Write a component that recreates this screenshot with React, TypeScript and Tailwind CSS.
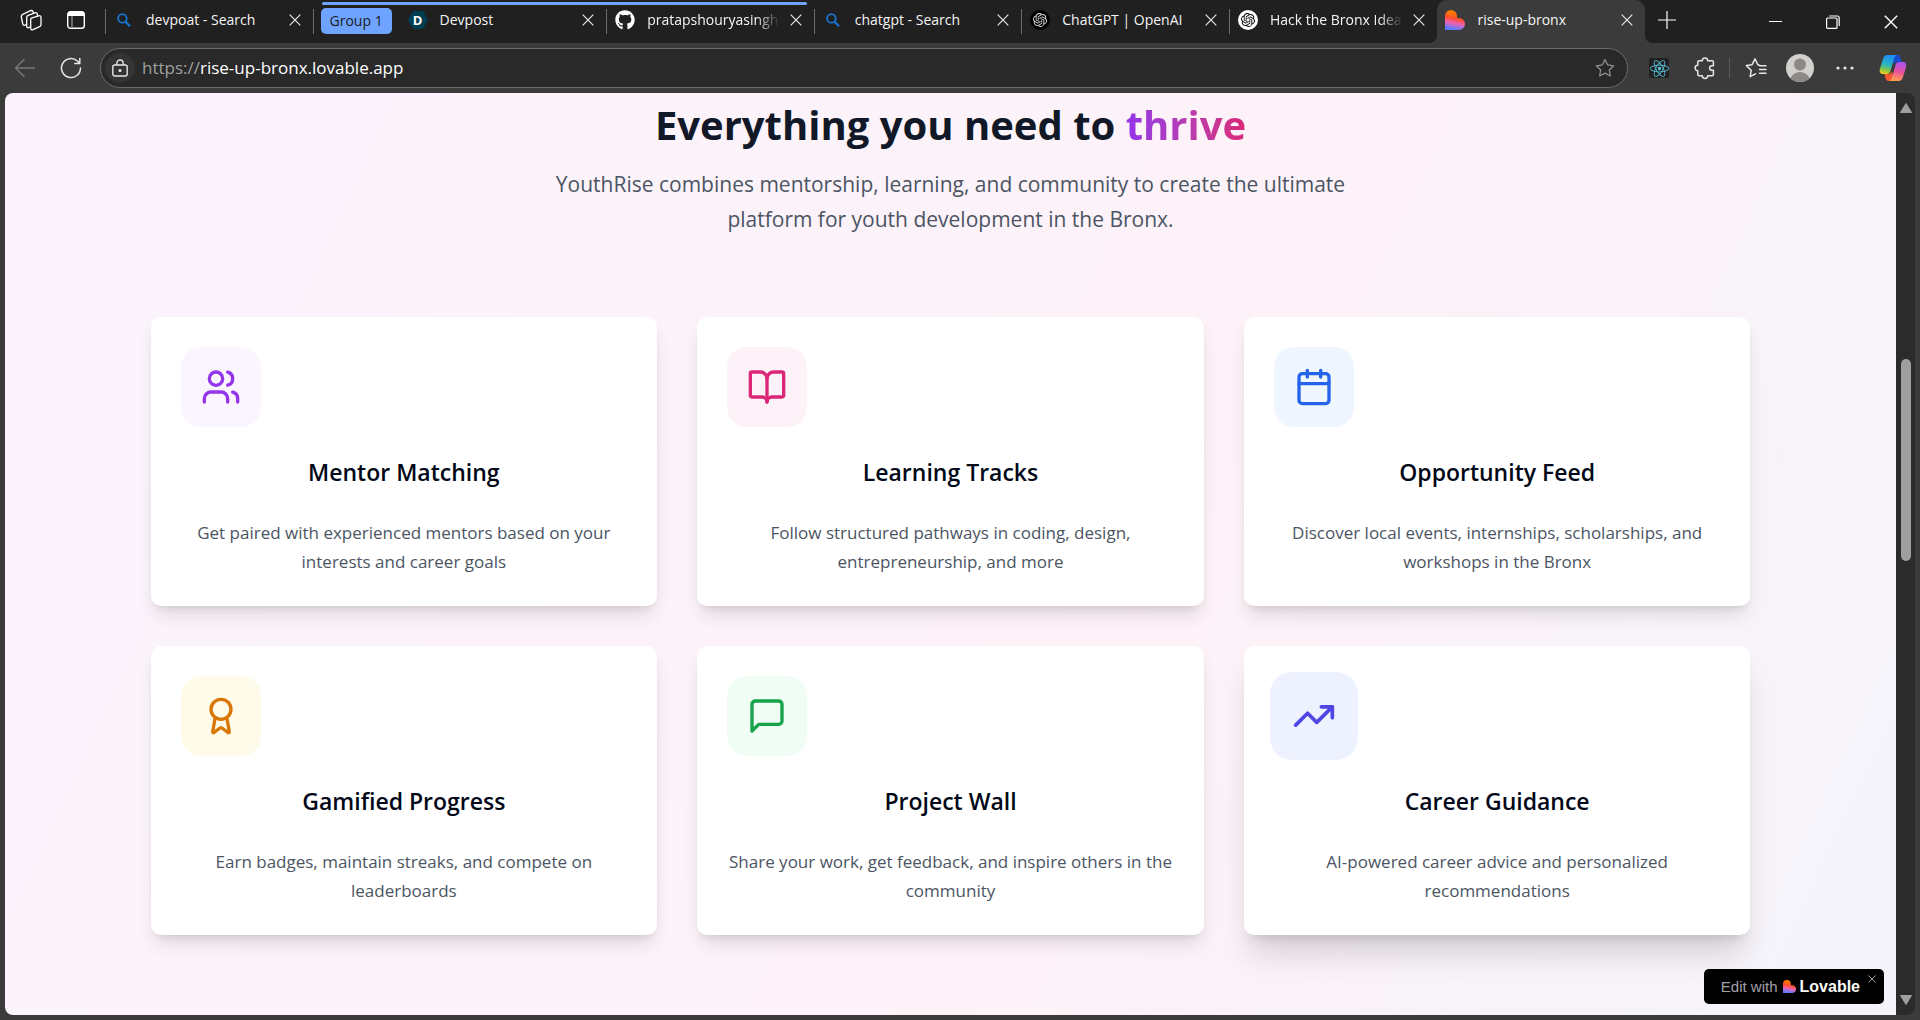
import React from "react";
import { Award, BookOpen, Calendar, TrendingUp, Users } from "lucide-react";
import { FaGithub, FaReact } from "react-icons/fa";
import { SiOpenai } from "react-icons/si";

type IconProps = { className?: string };

/* ---------- icons ---------- */

function MessageIcon({ className }: IconProps) {
  return (
    <svg viewBox="0 0 24 24" fill="none" stroke="currentColor" strokeWidth="2" strokeLinecap="round" strokeLinejoin="round" className={className}>
      <path d="M21 15a2 2 0 0 1-2 2H7l-4 4V5a2 2 0 0 1 2-2h14a2 2 0 0 1 2 2z" />
    </svg>
  );
}

function CloseIcon({ className }: IconProps) {
  return (
    <svg viewBox="0 0 12 12" fill="none" stroke="currentColor" strokeWidth="1.2" className={className}>
      <path d="M.7.7l10.6 10.6M11.3.7L.7 11.3" />
    </svg>
  );
}

function SearchFavicon() {
  return (
    <svg viewBox="0 0 20 20" fill="none" stroke="#1477d1" className="size-5">
      <circle cx="8.4" cy="8.4" r="4.3" strokeWidth="1.8" />
      <path d="M11.6 11.8l4.4 4.4" strokeWidth="2.1" />
    </svg>
  );
}

function DevpostFavicon() {
  return (
    <span className="relative flex size-5 items-center justify-center">
      <svg viewBox="0 0 20 20" className="absolute inset-0 size-5">
        <path d="M5.2 1h9.6L20 10l-5.2 9H5.2L0 10z" fill="#003e54" />
      </svg>
      <span className="relative text-[13px] leading-none font-bold text-white">D</span>
    </span>
  );
}

function LovableHeart({ className }: IconProps) {
  return (
    <svg viewBox="0 0 20 20" className={className}>
      <defs>
        <linearGradient id="heart" x1="0.55" y1="0" x2="0.35" y2="1">
          <stop offset="0.15" stopColor="#ff7a00" />
          <stop offset="0.42" stopColor="#ff4f2c" />
          <stop offset="0.65" stopColor="#ee62b4" />
          <stop offset="0.95" stopColor="#5b7bff" />
        </linearGradient>
      </defs>
      <path d="M6 0a6 6 0 0 1 6 6v2h2a6 6 0 0 1 0 12H0V6a6 6 0 0 1 6-6z" fill="url(#heart)" />
    </svg>
  );
}

function WorkspacesIcon() {
  return (
    <svg viewBox="0 0 22 22" fill="none" stroke="currentColor" strokeWidth="1.3" strokeLinejoin="round" strokeLinecap="round" className="size-[22px]">
      <path d="M11.3 9.1l7.5-2.3c1.300-.4 2.200.3 2.200 1.500v7.200c0 1-.4 1.700-1.400 2.100l-6.600 3.100c-1.200.5-2.300-.1-2.300-1.400v-7.800c0-1.200-.1-2 .6-2.400z" />
      <path d="M10.700 17.800l-2 .8c-1.200.4-2-.3-2-1.400V8.600c0-1.100.5-1.900 1.500-2.300l6.700-2.500c1.200-.4 2.200 0 2.500 1.300v1.800" />
      <path d="M6.500 15.700l-1.600.5c-1.200.4-2.200-.3-2.200-1.500L1.300 8c-.1-1.100.4-2.200 1.400-2.600l7.800-3.700c1.200-.5 2-.1 2.500.8l.5 1.500" />
    </svg>
  );
}

function TabPanelIcon() {
  return (
    <svg viewBox="0 0 20 20" className="size-5" fill="none" stroke="currentColor" strokeWidth="1.4">
      <rect x="1.7" y="1.7" width="16.6" height="16.6" rx="2.8" />
      <path d="M2 3.500A2 2 0 0 1 4 1.500h12a2 2 0 0 1 2 2V6H2z" fill="currentColor" stroke="none" />
      <path d="M6 6v12" stroke="#8a8a8a" />
    </svg>
  );
}

function PuzzleIcon() {
  return (
    <svg viewBox="0 0 24 24" fill="none" stroke="currentColor" strokeWidth="1.5" strokeLinejoin="round" className="size-6">
      <path d="M6 4.800h3.300a2.700 2.700 0 0 1 5.400 0h4.500a1.200 1.200 0 0 1 1.200 1.200v3.700h-1.500a2.300 2.300 0 1 0 0 4.600h1.500v4.200a1.200 1.200 0 0 1-1.200 1.200h-4.500a2.700 2.700 0 0 1-5.400 0H6a1.200 1.200 0 0 1-1.200-1.200v-3.800a2.700 2.700 0 0 1 0-5.400V6A1.200 1.200 0 0 1 6 4.800z" />
    </svg>
  );
}

function StarIcon({ className }: IconProps) {
  return (
    <svg viewBox="0 0 24 24" fill="none" stroke="currentColor" strokeWidth="1.4" strokeLinejoin="round" className={className}>
      <path d="M12 2.800l2.900 5.900 6.500.9-4.700 4.600 1.100 6.500-5.800-3.100-5.800 3.100 1.100-6.500-4.700-4.600 6.500-.9z" />
    </svg>
  );
}

function FavoritesIcon() {
  return (
    <svg viewBox="0 0 24 24" fill="none" stroke="currentColor" strokeWidth="1.5" strokeLinejoin="round" strokeLinecap="round" className="size-6">
      <path d="M11.500 17.800l-5.300 2.900 1-6.500L2.400 9.600l5.700-.9L11 2.800l2.800 5.900 1.700.5M15.500 13.500h6.500M15.500 17.200h6.500M15.500 9.800h6.500" />
    </svg>
  );
}

function CopilotIcon() {
  return (
    <svg viewBox="0 0 28 28" className="size-7">
      <defs>
        <linearGradient id="cpLeft" x1="0.5" y1="0" x2="0.3" y2="1">
          <stop offset="0" stopColor="#1f8df5" />
          <stop offset="0.5" stopColor="#27b4c4" />
          <stop offset="0.8" stopColor="#8cc63f" />
          <stop offset="1" stopColor="#f0cf1b" />
        </linearGradient>
        <linearGradient id="cpRight" x1="0.6" y1="0" x2="0.4" y2="1">
          <stop offset="0" stopColor="#a855f0" />
          <stop offset="0.5" stopColor="#e9509c" />
          <stop offset="1" stopColor="#ffa24a" />
        </linearGradient>
      </defs>
      <path d="M13 1h5.500c2 0 2.600 1.300 3.200 3.200L22.600 8h-4c-2 0-3 1-3.600 3z" fill="#1849c8" />
      <path d="M15 27H9.500c-2 0-2.600-1.300-3.200-3.200L5.400 20h4c2 0 3-1 3.600-3z" fill="#f3582f" />
      <path d="M8.500 1H18c-1.600.5-2.300 1.600-2.900 3.500L11.400 17c-.6 2-1.600 3-3.500 3H4c-3 0-3.800-2.500-3-5.500L4 5c.8-2.700 2-4 4.500-4z" fill="url(#cpLeft)" />
      <path d="M19.500 27H10c1.600-.5 2.300-1.600 2.900-3.500L16.600 11c.6-2 1.600-3 3.500-3H24c3 0 3.800 2.500 3 5.500L24 23c-.8 2.700-2 4-4.500 4z" fill="url(#cpRight)" />
    </svg>
  );
}

/* ---------- browser window ---------- */

type TabProps = {
  title: string;
  icon: React.ReactNode;
  active?: boolean;
  divider?: boolean;
  fade?: boolean;
};

function Tab({ title, icon, active, divider = true, fade }: TabProps) {
  return (
    <div
      className={
        active
          ? "relative flex h-[43px] min-w-0 flex-[1_1_0px] rounded-t-[10px] bg-[#3b3b3b]"
          : "relative flex h-[43px] min-w-0 flex-[1_1_0px]"
      }
    >
      {active && (
        <>
          <span className="absolute bottom-0 -left-2 size-2 bg-[radial-gradient(circle_at_0_0,#202020_8px,#3b3b3b_8px)]" />
          <span className="absolute -right-2 bottom-0 size-2 bg-[radial-gradient(circle_at_100%_0,#202020_8px,#3b3b3b_8px)]" />
        </>
      )}
      <div className="flex h-10 min-w-0 flex-1 items-center pr-[10px] pl-2">
        <span className="flex size-5 shrink-0 items-center justify-center">{icon}</span>
        <a
          href="#"
          className={
            fade
              ? "ml-3 min-w-0 flex-1 [mask-image:linear-gradient(to_right,black_calc(100%-24px),transparent)] text-[14px] leading-5 whitespace-nowrap text-[#f4f4f4]"
              : "ml-3 min-w-0 flex-1 text-[14px] leading-5 whitespace-nowrap text-[#f4f4f4]"
          }
        >
          {title}
        </a>
        <button aria-label={`Close ${title}`} className="ml-2 flex size-4 shrink-0 items-center justify-center text-[#e8e8e8]">
          <CloseIcon className="size-3" />
        </button>
      </div>
      {divider && <span className="mt-[9px] h-[25px] w-px shrink-0 bg-[#6b6b6b]" />}
    </div>
  );
}

function TabStrip() {
  return (
    <header className="flex h-[43px] bg-[#202020] text-white">
      <div className="flex w-[106px] shrink-0">
        <div className="flex h-10 flex-1 items-center gap-6 pl-5">
          <button aria-label="Workspaces">
            <WorkspacesIcon />
          </button>
          <button aria-label="Tab actions">
            <TabPanelIcon />
          </button>
        </div>
        <span className="mt-[9px] h-[25px] w-px bg-[#6b6b6b]" />
      </div>

      <nav aria-label="Tabs" className="flex min-w-0 flex-1">
        <Tab title="devpoat - Search" icon={<SearchFavicon />} />
        <div className="relative flex min-w-0 flex-[2_1_86px]">
          <span className="absolute top-[2px] right-2 left-2 h-[3px] rounded-full bg-[#6ea4ff]" />
          <button className="mr-2 ml-[7px] mt-2 h-[26px] w-[71px] shrink-0 rounded-[5px] bg-[#6ea4ff] text-[14px] leading-5 text-[#1b1b1b]">
            Group 1
          </button>
          <Tab title="Devpost" icon={<DevpostFavicon />} />
          <Tab title="pratapshouryasingh" icon={<FaGithub className="size-5" />} fade />
        </div>
        <Tab title="chatgpt - Search" icon={<SearchFavicon />} />
        <Tab
          title="ChatGPT | OpenAI"
          icon={
            <span className="flex size-5 items-center justify-center rounded-full bg-black">
              <SiOpenai className="size-[14px] text-[#dcdcdc]" />
            </span>
          }
        />
        <Tab
          title="Hack the Bronx Idea"
          divider={false}
          fade
          icon={
            <span className="flex size-5 items-center justify-center rounded-full bg-white">
              <SiOpenai className="size-[14px] text-black" />
            </span>
          }
        />
        <Tab title="rise-up-bronx" active divider={false} icon={<LovableHeart className="size-5" />} />
      </nav>

      <div className="flex w-[275px] shrink-0 justify-between">
        <button aria-label="New tab" className="flex h-10 w-11 items-center justify-center">
          <svg viewBox="0 0 18 18" stroke="currentColor" strokeWidth="1.2" className="size-[18px]">
            <path d="M9 0v18M0 9h18" />
          </svg>
        </button>
        <div className="flex">
          <button aria-label="Minimize" className="flex h-[43px] w-[58px] items-center justify-center">
            <span className="h-px w-[13px] bg-white" />
          </button>
          <button aria-label="Restore" className="flex h-[43px] w-[58px] items-center justify-center">
            <svg viewBox="0 0 14 14" fill="none" stroke="currentColor" strokeWidth="1.2" className="size-[14px]">
              <rect x="0.6" y="3" width="10.4" height="10.4" rx="1" />
              <path d="M3.200 1h8a2 2 0 0 1 2 2v8" />
            </svg>
          </button>
          <button aria-label="Close window" className="flex h-[43px] w-[58px] items-center justify-center">
            <CloseIcon className="size-[14px]" />
          </button>
        </div>
      </div>
    </header>
  );
}

function Toolbar() {
  return (
    <div className="flex h-[50px] items-center bg-[#3b3b3b] pr-[13px] text-[#e6e6e6]">
      <div className="flex w-[100px] shrink-0 items-center gap-6 pl-[14px]">
        <button aria-label="Back" className="text-[#7a7a7a]">
          <svg viewBox="0 0 22 22" fill="none" stroke="currentColor" strokeWidth="1.3" className="size-[22px]">
            <path d="M10.500 2L1.500 11l9 9M1.500 11H21" />
          </svg>
        </button>
        <button aria-label="Refresh">
          <svg viewBox="0 0 22 22" fill="none" stroke="currentColor" strokeWidth="1.5" strokeLinecap="round" strokeLinejoin="round" className="size-[22px]">
            <path d="M20.500 11A9.500 9.500 0 1 1 17.400 4l2 2M19.800 1.500V6.500h-5" />
          </svg>
        </button>
      </div>

      <div className="flex h-10 min-w-0 flex-1 items-center rounded-full border border-[#6a6a6a] bg-[#292929] pr-[11px] pl-1">
        <button aria-label="Site information" className="flex size-[30px] shrink-0 items-center justify-center rounded-full bg-[#343434]">
          <svg viewBox="0 0 16 18" fill="none" stroke="currentColor" strokeWidth="1.4" className="h-[18px] w-4">
            <rect x="0.8" y="6" width="14.4" height="11" rx="2" />
            <path d="M4.800 6V4.200a3.200 3.200 0 0 1 6.400 0V6" />
            <circle cx="8" cy="11.5" r="0.9" fill="currentColor" />
          </svg>
        </button>
        <a href="https://rise-up-bronx.lovable.app" className="ml-[7px] flex-1 text-[17px] leading-6 text-white">
          <span className="text-[#a0a0a0]">https://</span>rise-up-bronx.lovable.app
        </a>
        <button aria-label="Add to favorites" className="text-[#8f8f8f]">
          <StarIcon className="size-[22px]" />
        </button>
      </div>

      <div className="flex shrink-0 items-center">
        <button aria-label="React Developer Tools" className="ml-[21px] flex size-5 items-center justify-center rounded-[2px] bg-[#202020]">
          <FaReact className="size-[19px] text-[#58c4dc]" />
        </button>
        <button aria-label="Extensions" className="ml-6">
          <PuzzleIcon />
        </button>
        <span className="ml-3 h-5 w-px bg-[#5c5c5c]" />
        <button aria-label="Favorites" className="ml-[14px]">
          <FavoritesIcon />
        </button>
        <button aria-label="Profile" className="ml-[18px]">
          <svg viewBox="0 0 28 28" className="size-7">
            <defs>
              <clipPath id="avatar">
                <circle cx="14" cy="14" r="14" />
              </clipPath>
            </defs>
            <circle cx="14" cy="14" r="14" fill="#d2d0cd" />
            <g clipPath="url(#avatar)" fill="#8c8884">
              <circle cx="14" cy="10.5" r="6" />
              <circle cx="14" cy="28.5" r="10.5" />
            </g>
          </svg>
        </button>
        <button aria-label="Settings and more" className="ml-[22px]">
          <svg viewBox="0 0 18 18" fill="currentColor" className="size-[18px]">
            <circle cx="2" cy="9" r="1.6" />
            <circle cx="9" cy="9" r="1.6" />
            <circle cx="16" cy="9" r="1.6" />
          </svg>
        </button>
        <button aria-label="Copilot" className="ml-[25px]">
          <CopilotIcon />
        </button>
      </div>
    </div>
  );
}

function Scrollbar() {
  return (
    <div className="flex w-[19px] shrink-0 flex-col items-center bg-[#2b2b2b] py-[10px]">
      <button aria-label="Scroll up">
        <svg viewBox="0 0 12 10" className="h-[10px] w-3">
          <path d="M6 .5L11.500 9.500H.5z" fill="#a0a0a0" stroke="#a0a0a0" strokeLinejoin="round" />
        </svg>
      </button>
      <span className="grow-[246]" />
      <span className="w-[10px] grow-[202] rounded-full bg-[#9f9f9f]" />
      <span className="grow-[434]" />
      <button aria-label="Scroll down">
        <svg viewBox="0 0 12 10" className="h-[10px] w-3">
          <path d="M.5.5h11L6 9.500z" fill="#a0a0a0" stroke="#a0a0a0" strokeLinejoin="round" />
        </svg>
      </button>
    </div>
  );
}

/* ---------- page ---------- */

const features = [
  {
    icon: Users,
    title: "Mentor Matching",
    description: "Get paired with experienced mentors based on your interests and career goals",
    color: "bg-[#faf5ff] text-[#9333ea]",
  },
  {
    icon: BookOpen,
    title: "Learning Tracks",
    description: "Follow structured pathways in coding, design, entrepreneurship, and more",
    color: "bg-[#fdf2f8] text-[#db2777]",
  },
  {
    icon: Calendar,
    title: "Opportunity Feed",
    description: "Discover local events, internships, scholarships, and workshops in the Bronx",
    color: "bg-[#eff6ff] text-[#2563eb]",
  },
  {
    icon: Award,
    title: "Gamified Progress",
    description: "Earn badges, maintain streaks, and compete on leaderboards",
    color: "bg-[#fffbeb] text-[#d97706]",
  },
  {
    icon: MessageIcon,
    title: "Project Wall",
    description: "Share your work, get feedback, and inspire others in the community",
    color: "bg-[#f0fdf4] text-[#16a34a]",
  },
  {
    icon: TrendingUp,
    title: "Career Guidance",
    description: "AI-powered career advice and personalized recommendations",
    color: "bg-[#eef2ff] text-[#4f46e5]",
    hovered: true,
  },
];

function FeatureCard({ feature }: { feature: (typeof features)[number] }) {
  const Icon = feature.icon;
  return (
    <article
      className={`rounded-[10px] bg-white p-[30px] ${
        feature.hovered
          ? "shadow-[0_25px_31px_-6px_rgba(0,0,0,0.14),0_10px_12px_-7px_rgba(0,0,0,0.12)]"
          : "shadow-[0_12px_19px_-4px_rgba(0,0,0,0.12),0_5px_8px_-5px_rgba(0,0,0,0.12)]"
      }`}
    >
      <div
        className={`flex size-20 items-center justify-center rounded-[20px] ${feature.color} ${
          feature.hovered ? "scale-110" : ""
        }`}
      >
        <Icon className="size-10" />
      </div>
      <h3 className="mt-7 text-center text-[23px] leading-[35px] font-semibold text-[#020817]">{feature.title}</h3>
      <p className="mt-7 text-center text-[17px] leading-[29px] text-[#4b5563]">{feature.description}</p>
    </article>
  );
}

function LovableBadge() {
  return (
    <aside className="absolute right-3 bottom-[11px] flex h-[35px] items-center rounded-[5px] bg-black pr-6 pl-[17px] font-['Liberation_Sans',Arial,sans-serif]">
      <a href="#" className="flex items-center">
        <span className="text-[15px] leading-5 text-[#a1a1aa]">Edit with</span>
        <LovableHeart className="ml-[5px] size-[13px]" />
        <span className="ml-1 text-[16px] leading-5 font-bold text-[#fcfbf8]">Lovable</span>
      </a>
      <button aria-label="Dismiss" className="absolute top-[6px] right-2 text-[#c9c9c9]">
        <CloseIcon className="size-2" />
      </button>
    </aside>
  );
}

export default function App() {
  return (
    <div className="flex min-h-screen flex-col bg-[#3b3b3b] font-['Segoe_UI','Open_Sans','Noto_Sans',sans-serif]">
      <TabStrip />
      <Toolbar />
      <div className="mx-[5px] mb-[5px] flex flex-1 overflow-hidden rounded-lg">
        <main className="relative min-w-0 flex-1 bg-[linear-gradient(115deg,#fbf4fd_0%,#fdf2f8_59%,#f5f4fb_100%)] px-[30px] pt-[7px] pb-[60px]">
          <section className="mx-auto max-w-[1600px]">
            <h2 className="text-center text-[40px] leading-[50px] font-bold text-[#111827]">
              Everything you need to{" "}
              <span className="bg-gradient-to-r from-[#9333ea] to-[#db2777] bg-clip-text text-transparent">thrive</span>
            </h2>
            <p className="mx-auto mt-[17px] max-w-[840px] text-center text-[21px] leading-[35px] text-[#4b5563]">
              YouthRise combines mentorship, learning, and community to create the ultimate platform for youth
              development in the Bronx.
            </p>
            <div className="mt-20 grid grid-cols-3 gap-10">
              {features.map((feature) => (
                <FeatureCard key={feature.title} feature={feature} />
              ))}
            </div>
          </section>
          <LovableBadge />
        </main>
        <Scrollbar />
      </div>
    </div>
  );
}
